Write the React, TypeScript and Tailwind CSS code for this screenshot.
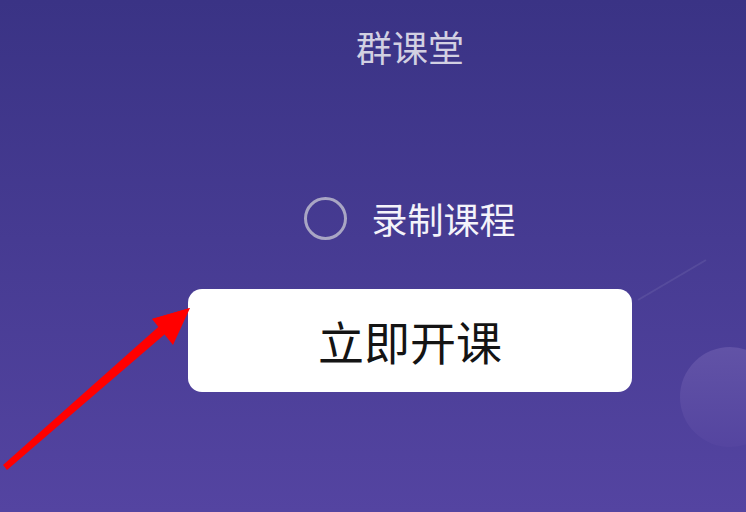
import React from 'react';

const font = { fontFamily: '"Noto Sans CJK SC", "Noto Sans", sans-serif' };

const Arrow = () => (
  <svg className="absolute left-0 top-0 pointer-events-none" width="746" height="512" viewBox="0 0 746 512">
    {/* shaft */}
    <polygon points="3,465 7,470 172,328 165,321" fill="#ff0000" />
    {/* head */}
    <polygon points="190,308 152,319 162,322 173,345 168,330" fill="#ff0000" />
    <polygon points="190,308 152,319 173,345" fill="#ff0000" />
  </svg>
);

export default function App() {
  return (
    <div
      className="relative w-[746px] h-[512px] overflow-hidden bg-gradient-to-b from-[#3a3385] to-[#5444a1]"
      style={font}
    >
      {/* decorations */}
      <div className="absolute left-[680px] top-[347px] w-[100px] h-[100px] rounded-full bg-gradient-to-b from-[#6455a8] to-[#5545a0] opacity-90" />
      <svg className="absolute left-0 top-0" width="746" height="512">
        <line x1="638" y1="300" x2="706" y2="260" stroke="#ffffff" strokeOpacity="0.08" strokeWidth="2" />
      </svg>

      <div className="relative flex flex-col items-center pl-[74px]">
        <div className="mt-[28px] text-[36px] leading-[36px] text-[#d2d0e2]">群课堂</div>

        <div className="mt-[132px] h-[44px] flex items-center gap-[24px]">
          <div className="w-[43px] h-[43px] rounded-full border-[3px] border-[#a9a6c4]" />
          <span className="text-[36px] leading-[44px] text-[#f4f3fa]">录制课程</span>
        </div>

        <button className="mt-[49px] w-[444px] h-[103px] rounded-[14px] bg-white flex items-center justify-center text-[46px] text-[#141414]">
          立即开课
        </button>
      </div>

      <Arrow />
    </div>
  );
}
